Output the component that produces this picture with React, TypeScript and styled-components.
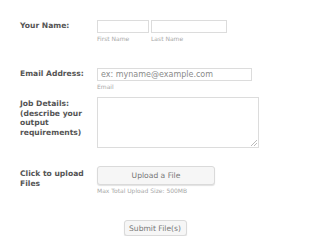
import React from 'react'
import styled, { createGlobalStyle } from 'styled-components'

const GlobalStyle = createGlobalStyle`
	html, body {
		margin: 0;
		padding: 0;
		background: #fff;
	}
	body {
		font-family: Verdana, 'DejaVu Sans', sans-serif;
	}
`

const Form = styled.form`
	padding: 20px 0 0 20px;
	width: 310px;
	box-sizing: border-box;
`

const Row = styled.div<{ $gap: number }>`
	display: grid;
	grid-template-columns: 77px auto;
	align-items: start;
	margin-bottom: ${({ $gap }) => $gap}px;
`

const Label = styled.label<{ $top?: number }>`
	font-size: 7.6px;
	font-weight: bold;
	line-height: 9.5px;
	color: #555;
	width: 68px;
	padding-top: ${({ $top }) => $top ?? 2}px;
`

const Field = styled.div`
	display: flex;
	flex-direction: column;
`

const Pair = styled.div`
	display: flex;
	gap: 2px;
`

const Sub = styled.span`
	font-size: 6px;
	line-height: 7px;
	color: #a8a8a8;
	margin-top: 2px;
`

const Input = styled.input<{ $w: number }>`
	box-sizing: border-box;
	width: ${({ $w }) => $w}px;
	height: 13px;
	border: 1px solid #dcdcdc;
	padding: 0 3px;
	font-family: inherit;
	font-size: 8px;
	color: #555;
	outline: none;
	&::placeholder {
		color: #8a8a8a;
	}
`

const Area = styled.textarea`
	box-sizing: border-box;
	width: 162px;
	height: 51px;
	border: 1px solid #dcdcdc;
	resize: none;
	outline: none;
	font-family: inherit;
	font-size: 8px;
	background:
		linear-gradient(135deg, transparent 45%, #bbb 45%, #bbb 55%, transparent 55%) right 1px bottom 1px / 3px 3px no-repeat,
		linear-gradient(135deg, transparent 45%, #bbb 45%, #bbb 55%, transparent 55%) right 1px bottom 1px / 6px 6px no-repeat,
		#fff;
`

const Button = styled.button<{ $w: number; $h: number }>`
	box-sizing: border-box;
	width: ${({ $w }) => $w}px;
	height: ${({ $h }) => $h}px;
	background: #f6f6f6;
	border: 1px solid #dadada;
	border-radius: 3px;
	box-shadow: 0 1px 1px rgba(0, 0, 0, 0.12);
	font-family: inherit;
	font-size: 7.6px;
	color: #777;
	padding: 0;
	cursor: pointer;
`

const Submit = styled.div`
	display: flex;
	justify-content: center;
	margin-left: -20px;
`

const App = () => {
	return (
		<>
			<GlobalStyle />
			<Form onSubmit={e => e.preventDefault()}>
				<Row $gap={26}>
					<Label $top={1}>Your Name:</Label>
					<Pair>
						<Field>
							<Input $w={52} />
							<Sub>First Name</Sub>
						</Field>
						<Field>
							<Input $w={76} />
							<Sub>Last Name</Sub>
						</Field>
					</Pair>
				</Row>
				<Row $gap={7}>
					<Label $top={1}>Email Address:</Label>
					<Field>
						<Input $w={155} placeholder='ex: myname@example.com' />
						<Sub>Email</Sub>
					</Field>
				</Row>
				<Row $gap={18}>
					<Label>
						Job Details: (describe your output requirements)
					</Label>
					<Area />
				</Row>
				<Row $gap={26}>
					<Label $top={3}>Click to upload Files</Label>
					<Field>
						<Button type='button' $w={118} $h={19}>
							Upload a File
						</Button>
						<Sub>Max Total Upload Size: 500MB</Sub>
					</Field>
				</Row>
				<Submit>
					<Button type='submit' $w={63} $h={16}>
						Submit File(s)
					</Button>
				</Submit>
			</Form>
		</>
	)
}

export default App
